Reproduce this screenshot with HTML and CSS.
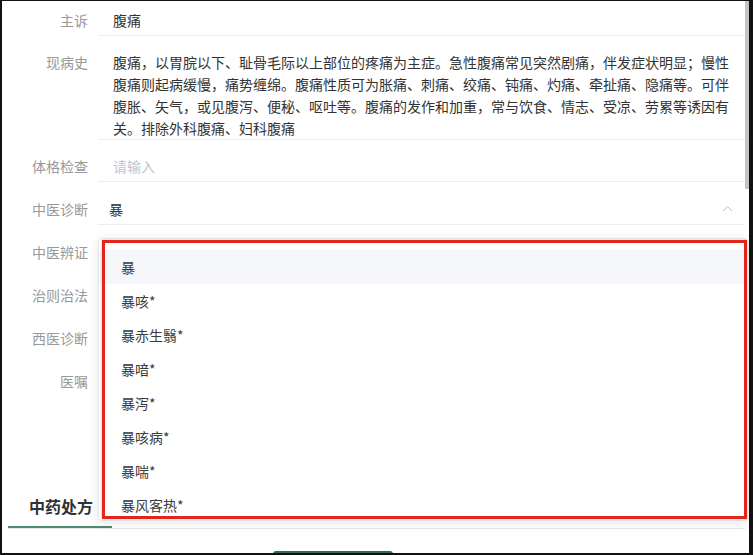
FILE: index.html
```html
<!DOCTYPE html>
<html lang="zh-CN">
<head>
<meta charset="utf-8">
<title>病历</title>
<link rel="stylesheet" href="styles.css">
</head>
<body>
<div class="frame">
  <div class="scroll-thumb"></div>
  <form class="form">
    <div class="row row-first">
      <span class="label">主诉</span>
      <div class="field">腹痛</div>
    </div>
    <div class="row">
      <span class="label">现病史</span>
      <div class="field area">腹痛，以胃脘以下、耻骨毛际以上部位的疼痛为主症。急性腹痛常见突然剧痛，伴发症状明显；慢性腹痛则起病缓慢，痛势缠绵。腹痛性质可为胀痛、刺痛、绞痛、钝痛、灼痛、牵扯痛、隐痛等。可伴腹胀、矢气，或见腹泻、便秘、呕吐等。腹痛的发作和加重，常与饮食、情志、受凉、劳累等诱因有关。排除外科腹痛、妇科腹痛</div>
    </div>
    <div class="row">
      <span class="label">体格检查</span>
      <div class="field placeholder">请输入</div>
    </div>
    <div class="row row-gap">
      <span class="label">中医诊断</span>
      <div class="field select">
        <span>暴</span>
        <svg class="chevron" width="11" height="7" viewBox="0 0 11 7"><path d="M1 6 L5.5 1.5 L10 6" fill="none" stroke="#b8bcc4" stroke-width="1"/></svg>
      </div>
    </div>
    <div class="row row-gap">
      <span class="label">中医辨证</span>
      <div class="field"></div>
    </div>
    <div class="row row-gap">
      <span class="label">治则治法</span>
      <div class="field"></div>
    </div>
    <div class="row row-gap">
      <span class="label">西医诊断</span>
      <div class="field"></div>
    </div>
    <div class="row row-gap">
      <span class="label">医嘱</span>
      <div class="field area tall"></div>
    </div>
  </form>
  <div class="tabs">
    <div class="tab active">中药处方</div>
  </div>
  <div class="actions"><button type="button" class="btn" aria-label="保存"></button></div>

  <div class="dropdown">
    <ul class="options">
      <li class="option hover">暴</li>
      <li class="option">暴咳*</li>
      <li class="option">暴赤生翳*</li>
      <li class="option">暴喑*</li>
      <li class="option">暴泻*</li>
      <li class="option">暴咳病*</li>
      <li class="option">暴喘*</li>
      <li class="option">暴风客热*</li>
    </ul>
  </div>
  <div class="annotation"></div>
</div>
</body>
</html>
```

FILE: styles.css
```css
* { box-sizing: border-box; }

html, body {
  margin: 0;
  padding: 0;
  background: #fff;
}

body {
  font-family: "Noto Sans CJK SC", "Noto Sans", "Liberation Sans", sans-serif;
  font-size: 14px;
  color: #333;
}

.frame {
  position: relative;
  width: 753px;
  height: 555px;
  overflow: hidden;
  border-style: solid;
  border-color: #111;
  border-width: 1px 4px 2px 2px;
  background: #fff;
}

.scroll-thumb {
  position: absolute;
  right: 0;
  top: 0;
  width: 4px;
  height: 188px;
  background: #c4c4c4;
}

.form {
  padding-right: 4px;
  margin: 0;
}

.row {
  display: grid;
  grid-template-columns: 86px 1fr;
  column-gap: 10px;
  margin-top: 10px;
}

.row-first { margin-top: 3px; }
.row-gap { margin-top: 11px; }

.label {
  text-align: right;
  color: #999;
  line-height: 22px;
  padding-top: 5px;
  white-space: nowrap;
}

.field {
  min-height: 32px;
  line-height: 22px;
  padding: 5px 12px 4px 15px;
  border-bottom: 1px solid #ebedf0;
  color: #333;
}

.area {
  padding-bottom: 0;
}

.tall {
  height: 76px;
}

.placeholder {
  color: #c0c4cc;
}

.select {
  display: flex;
  align-items: center;
  justify-content: space-between;
  padding-left: 11px;
  padding-right: 12px;
  padding-top: 4px;
}

.chevron {
  display: block;
}

.tabs {
  margin: 45px 4px 0 6px;
  border-bottom: 1px solid #e4e7ed;
  display: flex;
}

.tab {
  height: 42px;
  line-height: 40px;
  padding: 0 19px 0 21px;
  font-size: 16px;
  font-weight: 700;
  color: #303133;
  border-bottom: 2px solid transparent;
}

.tab.active {
  border-bottom-color: #4a8c6b;
}

.actions {
  margin-top: 22px;
  padding-left: 271px;
}

.btn {
  display: block;
  height: 32px;
  width: 120px;
  border: none;
  border-radius: 3px;
  background: #2f6b4f;
}

.dropdown {
  position: absolute;
  left: 96px;
  top: 237px;
  width: 649px;
  height: 283px;
  background: #fff;
  border: 1px solid #e4e7ed;
  border-radius: 4px;
  box-shadow: 0 2px 12px rgba(0, 0, 0, 0.1);
  padding-top: 11px;
  overflow: hidden;
}

.options {
  list-style: none;
  margin: 0;
  padding: 0;
}

.option {
  height: 34px;
  line-height: 34px;
  padding: 0 20px 0 22px;
  color: #3a3a3a;
  font-size: 14px;
}

.option.hover {
  background: #f5f7fa;
}

.annotation {
  position: absolute;
  left: 100px;
  top: 239px;
  width: 645px;
  height: 279px;
  border: 3px solid #e2261c;
  box-shadow: 0 0 2px rgba(226, 38, 28, 0.4);
}
```
